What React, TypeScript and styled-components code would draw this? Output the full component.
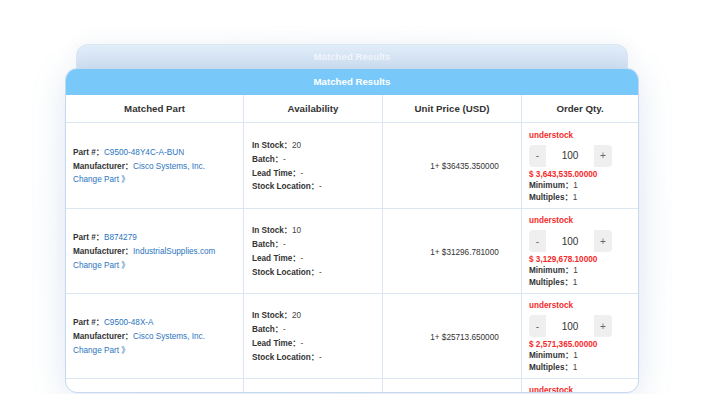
import React from "react";
import styled, { createGlobalStyle } from "styled-components";

const Global = createGlobalStyle`
  html, body {
    margin: 0;
    padding: 0;
    width: 703px;
    height: 394px;
    overflow: hidden;
    background: #ffffff;
    font-family: "Liberation Sans", Arial, "Noto Sans CJK SC", sans-serif;
  }
  * { box-sizing: border-box; }
`;

const Stage = styled.div`
  width: 703px;
  height: 394px;
  padding: 44px 0 0 65px;
  display: flex;
  flex-direction: column;
  align-items: flex-start;
  background: radial-gradient(ellipse 60% 70% at 50% 60%, #f3f6fb 0%, #ffffff 80%);
`;

const BackCard = styled.div`
  width: 552px;
  height: 30px;
  margin-left: 11px;
  border-radius: 12px 12px 0 0;
  background: linear-gradient(180deg, #e3eef9 0%, #cddef1 100%);
  border: 1px solid #dbe7f4;
  border-bottom: none;
  box-shadow: 0 -4px 18px rgba(120, 140, 170, 0.08);
  color: rgba(255, 255, 255, 0.75);
  font-weight: 700;
  font-size: 9.7px;
  line-height: 23px;
  text-align: center;
`;

const Card = styled.div`
  position: relative;
  width: 574px;
  height: 325px;
  margin-top: -6px;
  border: 1px solid #c7d9ee;
  border-radius: 12px;
  overflow: hidden;
  background: #ffffff;
  box-shadow: 0 6px 34px rgba(90, 130, 190, 0.2);
`;

const TitleBar = styled.div`
  height: 26px;
  background: #78c9f9;
  color: #ffffff;
  font-weight: 700;
  font-size: 9.7px;
  line-height: 25px;
  text-align: center;
`;

const GridRow = styled.div<{ $h: number }>`
  display: grid;
  grid-template-columns: 178px 139px 139px 1fr;
  height: ${(p) => p.$h}px;
  border-bottom: 1px solid #dbe6f3;
`;

const HeadCell = styled.div`
  display: flex;
  align-items: center;
  justify-content: center;
  border-right: 1px solid #dbe6f3;
  color: #333;
  font-weight: 700;
  font-size: 9.7px;
  &:last-child { border-right: none; }
`;

const Cell = styled.div<{ $pl: number; $center?: boolean }>`
  display: flex;
  flex-direction: column;
  justify-content: center;
  align-items: ${(p) => (p.$center ? "center" : "flex-start")};
  padding-left: ${(p) => p.$pl}px;
  padding-top: 2px;
  border-right: 1px solid #dbe6f3;
  font-size: 8.2px;
  color: #333;
  &:last-child { border-right: none; }
`;

const Line = styled.div<{ $lh?: number }>`
  line-height: ${(p) => p.$lh ?? 13.8}px;
  white-space: nowrap;
`;

const Label = styled.span`
  font-weight: 700;
  color: #333;
`;

const Value = styled.span`
  color: #444;
`;

const Link = styled.span`
  color: #2b74c0;
`;

const Price = styled.div`
  color: #333;
  font-size: 8.2px;
`;

const Red = styled.div<{ $lh: number }>`
  color: #f52a2a;
  font-weight: 700;
  line-height: ${(p) => p.$lh}px;
  white-space: nowrap;
`;

const Stepper = styled.div`
  display: flex;
  width: 83px;
  height: 22px;
  margin: 3px 0 2px;
  border-radius: 4px;
  background: #efefef;
  overflow: hidden;
`;

const StepBtn = styled.div<{ $w: number }>`
  width: ${(p) => p.$w}px;
  display: flex;
  align-items: center;
  justify-content: center;
  color: #666;
  font-size: 10px;
`;

const StepInput = styled.div`
  width: 48px;
  background: #ffffff;
  display: flex;
  align-items: center;
  justify-content: center;
  color: #333;
  font-size: 10px;
`;

type Item = {
  part: string;
  mfr: string;
  stock: string;
  price: string;
  amount: string;
};

const items: Item[] = [
  { part: "C9500-48Y4C-A-BUN", mfr: "Cisco Systems, Inc.", stock: "20", price: "1+ $36435.350000", amount: "$ 3,643,535.00000" },
  { part: "B874279", mfr: "IndustrialSupplies.com", stock: "10", price: "1+ $31296.781000", amount: "$ 3,129,678.10000" },
  { part: "C9500-48X-A", mfr: "Cisco Systems, Inc.", stock: "20", price: "1+ $25713.650000", amount: "$ 2,571,365.00000" },
  { part: "C9500-24Y4C-A", mfr: "Cisco Systems, Inc.", stock: "20", price: "1+ $21520.000000", amount: "$ 2,152,000.00000" },
];

const ResultRow = ({ it, h }: { it: Item; h: number }) => (
  <GridRow $h={h}>
    <Cell $pl={7}>
      <Line>
        <Label>Part #：</Label>
        <Link>{it.part}</Link>
      </Line>
      <Line>
        <Label>Manufacturer：</Label>
        <Link>{it.mfr}</Link>
      </Line>
      <Line>
        <Link>Change Part 》</Link>
      </Line>
    </Cell>
    <Cell $pl={8}>
      <Line>
        <Label>In Stock：</Label>
        <Value>{it.stock}</Value>
      </Line>
      <Line>
        <Label>Batch：</Label>
        <Value>-</Value>
      </Line>
      <Line>
        <Label>Lead Time：</Label>
        <Value>-</Value>
      </Line>
      <Line>
        <Label>Stock Location：</Label>
        <Value>-</Value>
      </Line>
    </Cell>
    <Cell $pl={25} $center>
      <Price>{it.price}</Price>
    </Cell>
    <Cell $pl={7}>
      <Red $lh={12}>understock</Red>
      <Stepper>
        <StepBtn $w={17}>-</StepBtn>
        <StepInput>100</StepInput>
        <StepBtn $w={18}>+</StepBtn>
      </Stepper>
      <Red $lh={11}>{it.amount}</Red>
      <Line $lh={12}>
        <Label>Minimum：</Label>
        <Value>1</Value>
      </Line>
      <Line $lh={12}>
        <Label>Multiples：</Label>
        <Value>1</Value>
      </Line>
    </Cell>
  </GridRow>
);

export default function App() {
  return (
    <>
      <Global />
      <Stage>
        <BackCard>Matched Results</BackCard>
        <Card>
          <TitleBar>Matched Results</TitleBar>
          <GridRow $h={28}>
            <HeadCell>Matched Part</HeadCell>
            <HeadCell>Availability</HeadCell>
            <HeadCell>Unit Price (USD)</HeadCell>
            <HeadCell>Order Qty.</HeadCell>
          </GridRow>
          {items.map((it, i) => (
            <ResultRow key={i} it={it} h={i === 0 ? 86 : 85} />
          ))}
        </Card>
      </Stage>
    </>
  );
}
